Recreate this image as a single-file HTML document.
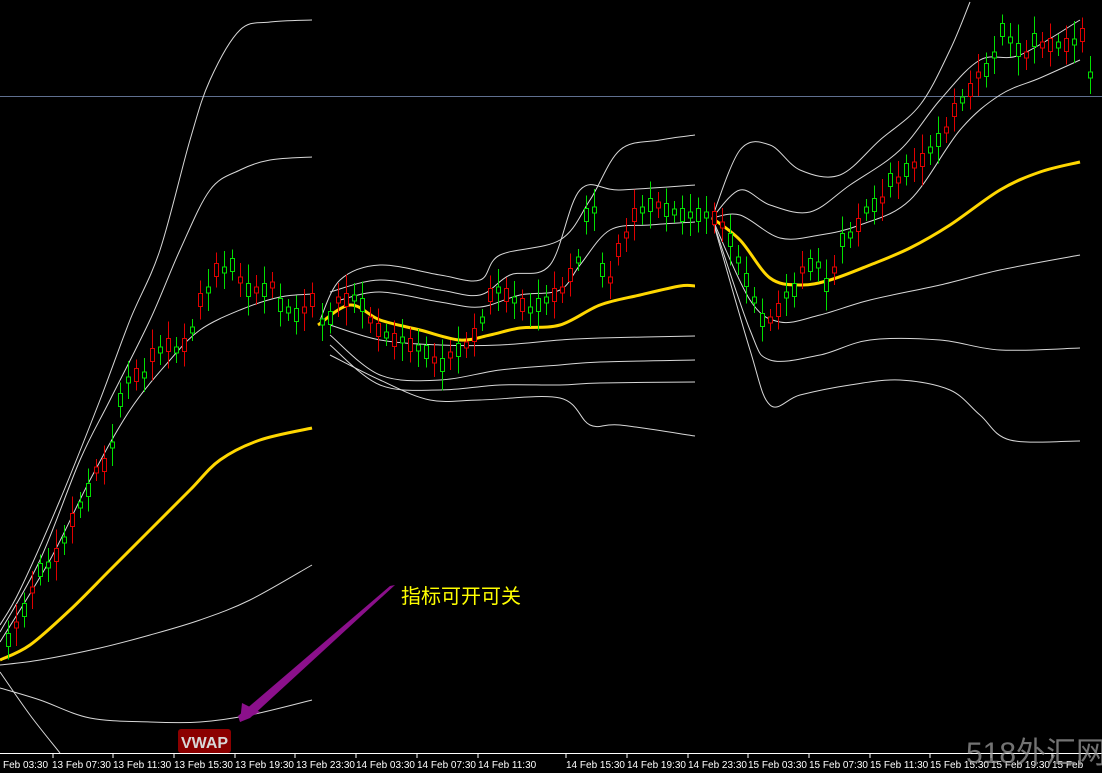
<!DOCTYPE html>
<html><head><meta charset="utf-8"><style>
html,body{margin:0;padding:0;background:#000;width:1102px;height:773px;overflow:hidden}
svg{display:block}
text{font-family:"Liberation Sans","Noto Sans CJK SC",sans-serif}
</style></head><body>
<svg id="s" width="1102" height="773" viewBox="0 0 1102 773" xmlns="http://www.w3.org/2000/svg">
<rect width="1102" height="773" fill="#000"/>
<line x1="0" y1="96.5" x2="1102" y2="96.5" stroke="#5f6f8f" stroke-width="1"/>
<g fill="none" stroke="#d8d8d8" stroke-width="1">
<polyline points="0,625 20,590 60,500 100,400 130,320 160,250 190,140 210,80 240,30 270,22 312,20"/>
<polyline points="0,632 40,560 80,460 110,400 150,320 180,250 210,190 240,170 270,160 312,157"/>
<polyline points="0,642 50,560 90,480 130,410 170,360 200,330 240,310 280,297 312,294"/>
<polyline points="0,665 40,660 100,648 150,635 200,620 250,600 312,565"/>
<polyline points="0,688 40,700 90,718 150,722 200,722 250,715 312,700"/>
<polyline points="0,672 30,715 60,753"/>
<polyline points="320,320 340,280 380,265 440,275 480,280 500,255 560,240 590,200 620,150 660,140 695,135"/>
<polyline points="330,292 380,280 440,290 480,295 510,275 550,265 580,190 620,190 695,185"/>
<polyline points="340,300 380,292 440,302 480,307 520,295 560,290 580,265 610,230 650,225 695,222"/>
<polyline points="330,325 380,340 440,345 500,345 560,340 600,338 695,336"/>
<polyline points="330,335 380,375 440,380 500,370 560,365 600,362 695,360"/>
<polyline points="330,345 380,385 440,390 500,385 560,385 600,383 695,382"/>
<polyline points="330,355 380,380 430,400 480,400 560,398 590,425 620,425 695,436"/>
<polyline points="712,218 740,150 770,145 800,170 840,175 880,140 920,105 950,50 970,2"/>
<polyline points="712,218 740,190 770,205 810,212 850,185 900,150 940,100 980,60 1020,55 1080,20"/>
<polyline points="712,218 740,215 780,238 820,235 860,225 910,200 960,130 1000,95 1040,78 1080,60"/>
<polyline points="712,218 750,300 780,322 820,315 870,300 940,285 1000,270 1080,255"/>
<polyline points="712,218 750,330 770,360 820,355 870,340 940,340 1000,350 1080,348"/>
<polyline points="712,218 750,350 770,405 800,395 850,385 900,380 950,390 980,415 1010,440 1080,441"/>
</g>
<g fill="none" stroke="#ffd700" stroke-width="3" stroke-linejoin="round">
<polyline points="0,660 30,645 70,610 110,570 150,530 190,490 220,460 260,440 312,428"/>
<polyline points="318,325 350,305 380,320 420,330 460,340 490,335 520,328 560,325 600,305 640,295 680,286 695,286"/>
<polyline points="712,218 740,240 770,278 800,285 830,280 870,265 910,248 950,225 1000,190 1040,172 1080,162"/>
</g>
<g id="c"></g>
<polygon points="395,585 390,586 238,716 240,722 250,718" fill="#8b108b"/>
<polygon points="240,722 242,703 260,712" fill="#8b108b"/>
<text x="401" y="603" font-size="20" fill="#ffff00">指标可开可关</text>
<rect x="178" y="729" width="53" height="24" rx="3" fill="#8b0000"/>
<text x="204.5" y="748" font-size="16" font-weight="bold" fill="#d8d8d8" text-anchor="middle" font-family="Liberation Sans Narrow,Liberation Sans,sans-serif">VWAP</text>
<line x1="0" y1="753.5" x2="1102" y2="753.5" stroke="#ffffff"/>
<g stroke="#fff"><line x1="53" y1="753" x2="53" y2="758"/><line x1="113" y1="753" x2="113" y2="758"/><line x1="174" y1="753" x2="174" y2="758"/><line x1="235" y1="753" x2="235" y2="758"/><line x1="295" y1="753" x2="295" y2="758"/><line x1="356" y1="753" x2="356" y2="758"/><line x1="417" y1="753" x2="417" y2="758"/><line x1="478" y1="753" x2="478" y2="758"/><line x1="566" y1="753" x2="566" y2="758"/><line x1="627" y1="753" x2="627" y2="758"/><line x1="688" y1="753" x2="688" y2="758"/><line x1="748" y1="753" x2="748" y2="758"/><line x1="809" y1="753" x2="809" y2="758"/><line x1="870" y1="753" x2="870" y2="758"/><line x1="930" y1="753" x2="930" y2="758"/><line x1="991" y1="753" x2="991" y2="758"/><line x1="1052" y1="753" x2="1052" y2="758"/></g>
<g font-size="10" fill="#fff">
<text x="3" y="768">Feb 03:30</text><text x="52" y="768">13 Feb 07:30</text><text x="113" y="768">13 Feb 11:30</text><text x="174" y="768">13 Feb 15:30</text><text x="235" y="768">13 Feb 19:30</text><text x="296" y="768">13 Feb 23:30</text><text x="356" y="768">14 Feb 03:30</text><text x="417" y="768">14 Feb 07:30</text><text x="478" y="768">14 Feb 11:30</text><text x="566" y="768">14 Feb 15:30</text><text x="627" y="768">14 Feb 19:30</text><text x="688" y="768">14 Feb 23:30</text><text x="748" y="768">15 Feb 03:30</text><text x="809" y="768">15 Feb 07:30</text><text x="870" y="768">15 Feb 11:30</text><text x="930" y="768">15 Feb 15:30</text><text x="991" y="768">15 Feb 19:30</text><text x="1052" y="768">15 Feb</text>
</g>
<text x="966" y="763" font-size="30" fill="#9a9a9a" fill-opacity="0.75">518外汇网</text>
</svg>
<script>
var d="6 640 g,14 625 r,22 610 g,30 590 r,38 570 g,46 565 g,54 555 r,62 540 g,70 520 r,78 505 g,86 490 g,94 470 r,102 465 r,110 445 g,118 400 g,126 380 g,134 375 r,142 375 g,150 355 r,158 350 g,166 345 r,174 350 g,182 345 r,190 330 g,198 300 r,206 290 g,214 270 r,222 270 g,230 265 g,238 280 r,246 290 g,254 290 r,262 290 g,270 285 r,278 305 g,286 310 g,294 315 g,302 310 r,310 300 r,320 322 g,328 318 g,336 300 r,344 300 r,352 298 g,360 305 g,368 320 r,376 330 r,384 335 g,392 340 r,400 340 g,408 345 r,416 348 g,424 352 g,432 360 r,440 365 g,448 355 r,456 350 g,464 345 r,472 335 r,480 320 g,488 295 r,496 290 g,504 295 r,512 300 g,520 305 r,528 310 g,536 305 g,544 300 g,552 295 r,560 290 r,568 275 r,576 260 g,584 215 g,592 210 g,600 270 g,608 280 r,616 250 r,624 235 r,632 215 r,640 210 g,648 205 g,656 205 r,664 210 g,672 212 g,680 215 g,688 215 g,696 215 g,704 215 g,712 218 r,720 225 r,728 240 g,736 260 g,744 280 g,752 300 g,760 320 g,768 320 r,776 310 r,784 295 g,792 290 g,800 270 r,808 265 g,816 265 g,824 285 g,832 270 r,840 240 g,848 235 g,856 225 r,864 210 g,872 205 g,880 200 r,888 180 g,896 180 r,904 170 g,912 165 r,920 160 r,928 150 g,936 140 g,944 130 r,952 110 r,960 100 g,968 90 r,976 75 r,984 70 g,992 55 g,1000 30 g,1008 40 g,1016 50 g,1024 55 r,1032 40 g,1040 45 r,1048 45 r,1056 45 g,1064 45 r,1072 42 g,1080 35 r,1088 75 g";
var g=document.getElementById("c"),s="",i=0;
d.split(",").forEach(function(e){var p=e.split(" "),x=+p[0],y=+p[1],c=p[2]=="g"?"#00e000":"#e00000";i++;var h=6+(i*7)%14,w=8+(i*5)%12;
s+='<line x1="'+(x+2.5)+'" y1="'+(y-h/2-w)+'" x2="'+(x+2.5)+'" y2="'+(y+h/2+w)+'" stroke="'+c+'"/>';
s+='<rect x="'+x+'.5" y="'+(y-h/2)+'" width="4" height="'+h+'" fill="#000" stroke="'+c+'"/>';});
g.innerHTML=s;
// smooth polylines with Catmull-Rom
document.querySelectorAll("polyline").forEach(function(pl){
 var pts=pl.getAttribute("points").trim().split(/\s+/).map(function(q){return q.split(",").map(Number)});
 if(pts.length<3)return;
 var dd="M"+pts[0][0]+","+pts[0][1];
 for(var k=0;k<pts.length-1;k++){
  var p0=pts[k-1]||pts[k],p1=pts[k],p2=pts[k+1],p3=pts[k+2]||p2;
  var c1x=p1[0]+(p2[0]-p0[0])/6,c1y=p1[1]+(p2[1]-p0[1])/6,c2x=p2[0]-(p3[0]-p1[0])/6,c2y=p2[1]-(p3[1]-p1[1])/6;
  dd+=" C"+c1x+","+c1y+" "+c2x+","+c2y+" "+p2[0]+","+p2[1];
 }
 var path=document.createElementNS("http://www.w3.org/2000/svg","path");
 path.setAttribute("d",dd);pl.parentNode.replaceChild(path,pl);
});
</script>
</body></html>
